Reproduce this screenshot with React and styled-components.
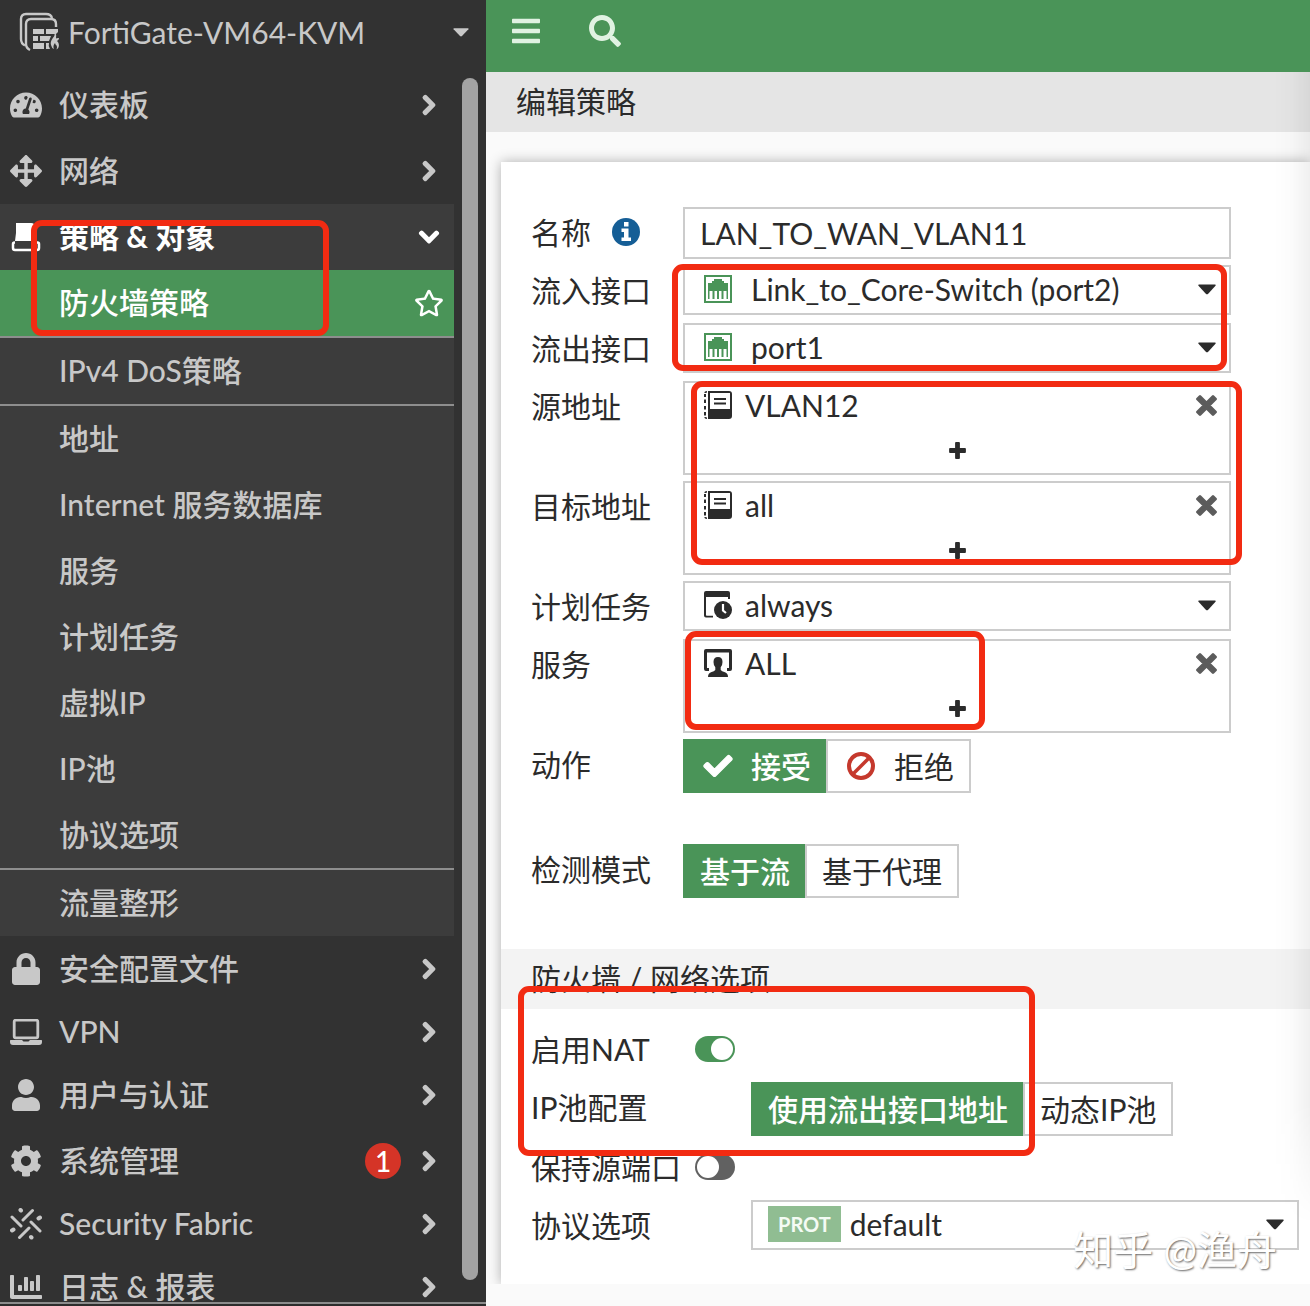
import React, { useState } from "react";
import styled, { createGlobalStyle, css } from "styled-components";
import {
  FaTachometerAlt,
  FaArrowsAlt,
  FaLock,
  FaUser,
  FaCog,
  FaChartBar,
  FaChevronRight,
  FaChevronDown,
  FaRegStar,
  FaBars,
  FaSearch,
  FaCheck,
} from "react-icons/fa";

const green = "#4a9458";
const ink = "#2b2b2b";
const line = "#cccccc";

const GlobalStyle = createGlobalStyle`
  *, *::before, *::after { box-sizing: border-box; }
  body { margin: 0; background: #fafafa; }
  body, button, input, select {
    font-family: Lato, "Noto Sans CJK SC", sans-serif;
    font-size: 30px;
    line-height: 44px;
    color: ${ink};
    font-kerning: normal;
    text-rendering: optimizeLegibility;
  }
  button { border: 0; padding: 0; background: none; cursor: pointer; }
  svg { display: block; flex: none; }
`;

/* ---------- layout ---------- */

const Page = styled.div`
  position: relative;
  display: flex;
  height: 100vh;
  overflow: hidden;
`;

const Sidebar = styled.aside`
  flex: 0 0 486px;
  display: flex;
  flex-direction: column;
  background: #323232;
  color: #c8c8c8;
  border-bottom: 2px solid #2c2c2c;
`;

const DeviceButton = styled.button`
  flex: 0 0 72px;
  display: flex;
  align-items: center;
  gap: 8px;
  padding: 0 17px 8px 19px;
  color: #c8c8c8;
  text-align: left;
`;

const DeviceName = styled.span`
  flex: 1;
`;

const NavArea = styled.div`
  flex: 1;
  min-height: 0;
  display: flex;
  gap: 8px;
  padding-right: 8px;
  border-bottom: 2px solid #8c8c8c;
`;

const Nav = styled.nav`
  flex: 1;
  overflow: hidden;
  font-weight: 500;
  line-height: 30px;
`;

const ScrollTrack = styled.div`
  width: 16px;
  padding: 6px 0 22px;
`;

const ScrollThumb = styled.div`
  height: 100%;
  border-radius: 8px;
  background: #a3a3a3;
`;

const NavItem = styled.a`
  display: flex;
  align-items: center;
  height: ${(p) => (p.$short ? 60 : 66)}px;
  padding: 0 10px;
  color: ${(p) => (p.$open ? "#ffffff" : "#c8c8c8")};
  font-weight: ${(p) => (p.$open ? 700 : 500)};
  background: ${(p) => (p.$open ? "#3c3c3c" : "transparent")};
  text-decoration: none;
`;

const NavIcon = styled.span`
  width: 32px;
  margin-right: 17px;
  display: flex;
  justify-content: center;
`;

const NavLabel = styled.span`
  flex: 1;
  padding-bottom: 2px;
  white-space: nowrap;
`;

const NavEnd = styled.span`
  width: 30px;
  display: flex;
  justify-content: center;
  svg {
    overflow: visible;
    stroke: currentColor;
    stroke-width: 36px;
  }
`;

const Count = styled.span`
  width: 36px;
  height: 36px;
  margin-right: 13px;
  border-radius: 50%;
  background: #d53427;
  color: #ffffff;
  font-size: 28px;
  font-weight: 500;
  line-height: 36px;
  text-align: center;
`;

const SubList = styled.div`
  background: #3c3c3c;
`;

const SubItem = styled.a`
  display: flex;
  align-items: center;
  height: ${(p) => (p.$divided ? 68 : 66)}px;
  padding: 0 10px 0 59px;
  color: #c8c8c8;
  text-decoration: none;
  ${(p) => p.$divided && css`border-bottom: 2px solid #8e8e8e;`}
  ${(p) => p.$active && css`background: ${green}; color: #ffffff;`}
`;

const Main = styled.main`
  flex: 1;
  min-width: 0;
  display: flex;
  flex-direction: column;
`;

const TopBar = styled.header`
  flex: 0 0 72px;
  display: flex;
  align-items: center;
  gap: 47px;
  padding: 0 24px 10px;
  background: ${green};
`;

const BarButton = styled.button`
  color: #e0f2e2;
`;

const Content = styled.div`
  position: relative;
  flex: 1;
  min-height: 0;
  display: flex;
  flex-direction: column;
  margin-bottom: 22px;
  overflow: hidden;
`;

const Title = styled.h1`
  flex: 0 0 60px;
  margin: 0;
  padding: 0 30px;
  background: #e5e5e5;
  font-size: 30px;
  font-weight: 400;
  line-height: 58px;
`;

const EdgeShade = styled.div`
  position: absolute;
  inset: 0 0 60px auto;
  width: 36px;
  background: linear-gradient(to right, rgba(0, 0, 0, 0), rgba(0, 0, 0, 0.015) 50%, rgba(0, 0, 0, 0.06));
  mask-image: linear-gradient(to top, transparent, #000 120px);
  pointer-events: none;
`;

const Panel = styled.form`
  flex: 1;
  margin: 30px 0 0 15px;
  background: #ffffff;
  box-shadow: 0 0 12px rgba(0, 0, 0, 0.3);
`;

const Fields = styled.div`
  padding: ${(p) => p.$top}px 0 0 30px;
`;

const SectionTitle = styled.h2`
  margin: 51px 0 0;
  padding: 0 30px 2px;
  background: #f3f3f3;
  font-size: 30px;
  font-weight: 400;
  line-height: 58px;
`;

const Row = styled.div`
  display: grid;
  grid-template-columns: ${(p) => (p.$nested ? 220 : p.$toggle ? 164 : 152)}px minmax(0, 548px);
  align-items: start;
  margin-bottom: ${(p) => p.$gap ?? 6}px;
`;

const Label = styled.label`
  display: flex;
  align-items: center;
  gap: 21px;
  height: 50px;
  line-height: 50px;
  white-space: nowrap;
`;

/* ---------- controls ---------- */

const TextInput = styled.input`
  width: 100%;
  height: 52px;
  padding: 0 15px;
  border: 2px solid ${line};
  background: #ffffff;
`;

const SelectBox = styled.div`
  display: flex;
  align-items: center;
  gap: ${(p) => p.$gap}px;
  height: 50px;
  padding: 0 13px 2px ${(p) => (p.$badge ? 15 : 19)}px;
  border: 2px solid ${line};
  background: #ffffff;
`;

const NativeSelect = styled.select`
  flex: 1;
  min-width: 0;
  height: 44px;
  border: 0;
  padding: 0;
  background: transparent;
  appearance: none;
`;

const Badge = styled.span`
  padding: 0 10px;
  background: #90bd92;
  color: #f4fbf4;
  font-size: 20px;
  font-weight: 700;
  line-height: 36px;
`;

const MultiBox = styled.div`
  height: 94px;
  border: 2px solid ${line};
  background: #ffffff;
`;

const Entry = styled.div`
  display: flex;
  align-items: center;
  gap: 13px;
  height: 44px;
  padding: 0 12px 0 19px;
`;

const EntryName = styled.span`
  flex: 1;
`;

const AddButton = styled.button`
  display: flex;
  width: 100%;
  height: 46px;
  align-items: center;
  justify-content: center;
`;

const Segments = styled.div`
  display: flex;
`;

const Segment = styled.button`
  display: flex;
  align-items: center;
  gap: 19px;
  height: 54px;
  padding: 0 15px 0 ${(p) => (p.$icon ? 19 : 15)}px;
  border: 2px solid ${line};
  background: #ffffff;
  white-space: nowrap;
  &:not(:last-child) { border-right: 0; }
  &[aria-pressed="true"] {
    border-color: ${green};
    background: ${green};
    color: #ffffff;
    font-weight: 500;
  }
`;

const CheckMark = styled(FaCheck)`
  overflow: visible;
  stroke: currentColor;
  stroke-width: 24px;
`;

const Toggle = styled.input`
  appearance: none;
  display: flex;
  width: 40px;
  height: 26px;
  margin: 12px 0 20px;
  padding: 2px;
  border-radius: 13px;
  background: #616161;
  cursor: pointer;
  &::before {
    content: "";
    width: 22px;
    height: 22px;
    border-radius: 50%;
    background: #ffffff;
  }
  &:checked {
    justify-content: flex-end;
    background: ${green};
  }
`;

/* ---------- markings laid over the page ---------- */

const Marker = styled.div`
  position: absolute;
  left: ${(p) => p.$x}px;
  top: ${(p) => p.$y}px;
  width: ${(p) => p.$w}px;
  height: ${(p) => p.$h}px;
  border: 6px solid #f22b12;
  border-radius: 11px;
  pointer-events: none;
`;

const Watermark = styled.div`
  position: absolute;
  right: 33px;
  bottom: 28px;
  color: #ffffff;
  font-size: 40px;
  line-height: 56px;
  text-shadow: 1px 1px 2px rgba(0, 0, 0, 0.6);
  pointer-events: none;
`;

/* ---------- drawings ---------- */

const CaretIcon = () => (
  <svg width="18" height="11" viewBox="0 0 18 11" aria-hidden="true">
    <path d="M1 .5h16q1.200.2.5 1.300L10.200 9.800q-1.200 1-2.400 0L.5 1.800Q-.2.7 1 .5z" fill="currentColor" />
  </svg>
);

const SmallCaretIcon = () => (
  <svg width="16" height="9" viewBox="0 0 16 9" aria-hidden="true">
    <path d="M1 .3h14q.9.2.4 1L9 8q-1 .8-2 0L.6 1.300Q.1.5 1 .3z" fill="currentColor" />
  </svg>
);

const FirewallIcon = () => (
  <svg width="41" height="40" viewBox="0 0 41 40" fill="none" aria-hidden="true">
    <path d="M6 33.500Q2 31.500 2 27V7q0-5 5-5h20q5 0 6 4" stroke="currentColor" strokeWidth="2.400" />
    <path d="M11 38Q7 36 7 32V12q0-5 5-5h20q5 0 5 5v3" stroke="currentColor" strokeWidth="2.400" />
    <path
      fill="currentColor"
      d="M14 17h11v5H14zM27 17h12v3l-2 2H27zM14 24h5v5h-5zM21 24h11l-2 5h-9zM14 31h11v6H14zM27 31h3q-1 3 1 6h-4z"
    />
    <path
      fill="currentColor"
      d="M36 20q0 4-2.500 6.500Q31 30 32 33q.6 3 3 4-1.500-3 1-6 .6 2 1.600 2.500Q38.500 35 37.500 37.500q3-2 2.300-5.500-.5-2-1.800-3 2-1 2-3-2-.2-3 .5Q38 23 36 20z"
    />
  </svg>
);

const PolicyIcon = () => (
  <svg width="30" height="30" viewBox="0 0 30 30" fill="none" aria-hidden="true">
    <path d="M5 1h15q4 0 4 4l-1 14H4L5 11z" fill="currentColor" />
    <path d="M4 20.500H3.500Q2 20.500 2 22v4q0 2 2 2h22q2 0 2-2v-4q0-1.500-1.500-1.500H24" stroke="currentColor" strokeWidth="2.500" />
  </svg>
);

const LaptopIcon = () => (
  <svg width="32" height="26" viewBox="0 0 32 26" fill="none" aria-hidden="true">
    <rect x="4.200" y="1.200" width="23.600" height="17.600" rx="1.500" stroke="currentColor" strokeWidth="2.800" />
    <path d="M.6 21H12l1.500 1.500h5L20 21h11.400q.6 0 .6.800V23q0 3-3 3H3q-3 0-3-3v-1.200Q0 21 .6 21z" fill="currentColor" />
  </svg>
);

const FabricIcon = () => (
  <svg width="32" height="32" viewBox="0 0 32 32" fill="none" stroke="currentColor" strokeWidth="3" strokeLinecap="round" aria-hidden="true">
    <path d="M2 9l9 9M22.500 2.500L13 12M30 23l-9-9M9.500 29.500L19 20" />
    <path d="M10.500 2l.5.500M30 9.500l-1.500 1M2 22.500l1.500-1M21.500 29.500l-.5-.500" strokeWidth="4" />
  </svg>
);

const InfoIcon = () => (
  <svg width="28" height="28" viewBox="0 0 28 28" aria-hidden="true">
    <circle cx="14" cy="14" r="14" fill="#155e96" />
    <path d="M12 4h4.500v4.500H12zM9.500 10.500h7V19.500H19V23H9.500v-3.500H12V14H9.500z" fill="#fff" />
  </svg>
);

const PortIcon = () => (
  <svg width="28" height="28" viewBox="0 0 28 28" aria-hidden="true">
    <rect x="1" y="1" width="26" height="26" fill="#fff" stroke={green} strokeWidth="2" />
    <path
      fill={green}
      d="M4 8h4V6h2V4h8v2h2v2h4v16h-1.500v-8h-3v8h-2v-8H15v8h-2v-8h-2.500v8h-2v-8h-3v8H4z"
    />
  </svg>
);

const AddressIcon = () => (
  <svg width="28" height="28" viewBox="0 0 28 28" aria-hidden="true">
    <path d="M4 0h21q3 0 3 3v22q0 3-3 3H4v-1.500h2v-25H4z" fill={ink} />
    <path d="M6 2h20v16H6z" fill="#fff" />
    <path d="M4 0v28h2V0z" fill={ink} />
    <path d="M10 8h12M10 12.500h12" stroke={ink} strokeWidth="2" />
    <path d="M1 3v3M1 8.500v3.500M1 15v3.500M1 21v3.500" stroke={ink} strokeWidth="2" />
    <path d="M1 2q0-1.200 2-1.200M1 26q0 1.200 2 1.200" stroke={ink} strokeWidth="1.500" fill="none" />
  </svg>
);

const ScheduleIcon = () => (
  <svg width="28" height="28" viewBox="0 0 28 28" aria-hidden="true">
    <path d="M2 0h22q2 0 2 2v6h-2V6H2v18q0 .8.8.8H9V26.500H2q-2 0-2-2V2q0-2 2-2z" fill={ink} />
    <circle cx="19" cy="19" r="9" fill={ink} />
    <path d="M19 13v6.500l3 2.500" stroke="#fff" strokeWidth="2.200" fill="none" />
  </svg>
);

const ServiceIcon = () => (
  <svg width="28" height="28" viewBox="0 0 28 28" aria-hidden="true">
    <path d="M2 0h24q2 0 2 2v18q0 2-2 2h-3v-3h2V3.500H3V19h2v3H2q-2 0-2-2V2q0-2 2-2z" fill={ink} />
    <path
      d="M14 8q4.500 0 4.500 5 0 3.500-1.800 5.200V21q1 1.200 4.300 2.200 3 1 3 4.800H4q0-3.800 3-4.800 3.300-1 4.300-2.200v-2.800Q9.500 16.500 9.500 13q0-5 4.500-5z"
      fill={ink}
    />
  </svg>
);

const DenyIcon = () => (
  <svg width="28" height="28" viewBox="0 0 28 28" fill="none" stroke="#c5392d" strokeWidth="4" aria-hidden="true">
    <circle cx="14" cy="14" r="12" />
    <path d="M6 22L22 6" strokeWidth="3.500" />
  </svg>
);

const RemoveIcon = () => (
  <svg width="21" height="21" viewBox="0 0 21 21" aria-hidden="true">
    <path
      d="M4 1.500L10.500 8 17 1.500 19.500 4 13 10.500l6.500 6.500-2.500 2.500L10.500 13 4 19.500 1.500 17 8 10.500 1.500 4z"
      fill="#5c5c5c"
      stroke="#5c5c5c"
      strokeWidth="2.800"
      strokeLinejoin="round"
    />
  </svg>
);

const PlusIcon = () => (
  <svg width="17" height="17" viewBox="0 0 17 17" aria-hidden="true">
    <path d="M7 1h3v6h6v3h-6v6H7v-6H1V7h6z" fill={ink} stroke={ink} strokeWidth="1.800" strokeLinejoin="round" />
  </svg>
);

/* ---------- parts ---------- */

function NavRow({ icon, label, short, open, count }) {
  return (
    <NavItem href="#" $short={short} $open={open} aria-expanded={!!open}>
      <NavIcon>{icon}</NavIcon>
      <NavLabel>{label}</NavLabel>
      {count && <Count>{count}</Count>}
      <NavEnd>{open ? <FaChevronDown size={22} /> : <FaChevronRight size={22} />}</NavEnd>
    </NavItem>
  );
}

function SelectRow({ id, label, icon, value, gap = 13, rowGap = 8, badge, nested }) {
  return (
    <Row $gap={rowGap} $nested={nested}>
      <Label htmlFor={id}>{label}</Label>
      <SelectBox $gap={gap} $badge={!!badge}>
        {badge ? <Badge>{badge}</Badge> : icon}
        <NativeSelect id={id} defaultValue={value}>
          <option>{value}</option>
        </NativeSelect>
        <CaretIcon />
      </SelectBox>
    </Row>
  );
}

function MultiRow({ id, label, icon, value }) {
  return (
    <Row>
      <Label as="span" id={id}>{label}</Label>
      <MultiBox role="group" aria-labelledby={id}>
        <Entry>
          {icon}
          <EntryName>{value}</EntryName>
          <button type="button" aria-labelledby={id}><RemoveIcon /></button>
        </Entry>
        <AddButton type="button" aria-labelledby={id}><PlusIcon /></AddButton>
      </MultiBox>
    </Row>
  );
}

function SegmentRow({ id, label, options, gap, nested }) {
  const [selected, setSelected] = useState(0);
  return (
    <Row $gap={gap} $nested={nested}>
      <Label as="span" id={id}>{label}</Label>
      <Segments role="group" aria-labelledby={id}>
        {options.map((option, i) => (
          <Segment
            key={option.text}
            type="button"
            $icon={!!option.icon}
            aria-pressed={selected === i}
            onClick={() => setSelected(i)}
          >
            {option.icon}
            {option.text}
          </Segment>
        ))}
      </Segments>
    </Row>
  );
}

function ToggleRow({ id, label, on }) {
  return (
    <Row $toggle $gap={0}>
      <Label htmlFor={id}>{label}</Label>
      <Toggle id={id} type="checkbox" defaultChecked={on} />
    </Row>
  );
}

const policyItems = [
  { text: "IPv4 DoS策略", divided: true },
  { text: "地址" },
  { text: "Internet 服务数据库" },
  { text: "服务" },
  { text: "计划任务" },
  { text: "虚拟IP" },
  { text: "IP池" },
  { text: "协议选项", divided: true },
  { text: "流量整形" },
];

export default function App() {
  return (
    <Page>
      <GlobalStyle />
      <Sidebar>
        <DeviceButton type="button">
          <FirewallIcon />
          <DeviceName>FortiGate-VM64-KVM</DeviceName>
          <SmallCaretIcon />
        </DeviceButton>
        <NavArea>
          <Nav>
            <NavRow icon={<FaTachometerAlt size={32} />} label="仪表板" />
            <NavRow icon={<FaArrowsAlt size={32} />} label="网络" />
            <NavRow icon={<PolicyIcon />} label="策略 & 对象" open />
            <SubList>
              <SubItem href="#" $active $divided aria-current="page">
                <NavLabel>防火墙策略</NavLabel>
                <FaRegStar size={30} />
              </SubItem>
              {policyItems.map((item) => (
                <SubItem key={item.text} href="#" $divided={item.divided}>
                  <NavLabel>{item.text}</NavLabel>
                </SubItem>
              ))}
            </SubList>
            <NavRow icon={<FaLock size={32} />} label="安全配置文件" />
            <NavRow icon={<LaptopIcon />} label="VPN" short />
            <NavRow icon={<FaUser size={32} />} label="用户与认证" />
            <NavRow icon={<FaCog size={32} />} label="系统管理" count="1" />
            <NavRow icon={<FabricIcon />} label="Security Fabric" short />
            <NavRow icon={<FaChartBar size={32} />} label="日志 & 报表" />
          </Nav>
          <ScrollTrack><ScrollThumb /></ScrollTrack>
        </NavArea>
      </Sidebar>

      <Main>
        <TopBar>
          <BarButton type="button" aria-label="菜单"><FaBars size={32} /></BarButton>
          <BarButton type="button" aria-label="搜索"><FaSearch size={32} /></BarButton>
        </TopBar>
        <Content>
          <Title>编辑策略</Title>
          <Panel onSubmit={(e) => e.preventDefault()}>
            <Fields $top={45}>
              <Row>
                <Label htmlFor="name">
                  名称
                  <InfoIcon />
                </Label>
                <TextInput id="name" type="text" defaultValue="LAN_TO_WAN_VLAN11" />
              </Row>
              <SelectRow id="incoming" label="流入接口" icon={<PortIcon />} value="Link_to_Core-Switch (port2)" gap={19} />
              <SelectRow id="outgoing" label="流出接口" icon={<PortIcon />} value="port1" gap={19} />
              <MultiRow id="source" label="源地址" icon={<AddressIcon />} value="VLAN12" />
              <MultiRow id="destination" label="目标地址" icon={<AddressIcon />} value="all" />
              <SelectRow id="schedule" label="计划任务" icon={<ScheduleIcon />} value="always" />
              <MultiRow id="service" label="服务" icon={<ServiceIcon />} value="ALL" />
              <SegmentRow
                id="action"
                label="动作"
                gap={51}
                options={[
                  { text: "接受", icon: <CheckMark size={28} /> },
                  { text: "拒绝", icon: <DenyIcon /> },
                ]}
              />
              <SegmentRow id="inspection" label="检测模式" gap={0} options={[{ text: "基于流" }, { text: "基于代理" }]} />
            </Fields>
            <SectionTitle>防火墙 / 网络选项</SectionTitle>
            <Fields $top={15}>
              <ToggleRow id="nat" label="启用NAT" on />
              <SegmentRow id="pool" label="IP池配置" nested options={[{ text: "使用流出接口地址" }, { text: "动态IP池" }]} />
              <ToggleRow id="preserve" label="保持源端口" />
              <SelectRow id="protocol" label="协议选项" badge="PROT" value="default" gap={9} rowGap={0} nested />
            </Fields>
          </Panel>
          <EdgeShade />
        </Content>
      </Main>

      <Marker $x={31} $y={220} $w={298} $h={116} />
      <Marker $x={672} $y={264} $w={555} $h={107} />
      <Marker $x={691} $y={381} $w={551} $h={184} />
      <Marker $x={685} $y={631} $w={300} $h={99} />
      <Marker $x={518} $y={986} $w={517} $h={170} />
      <Watermark>知乎 @渔舟</Watermark>
    </Page>
  );
}
